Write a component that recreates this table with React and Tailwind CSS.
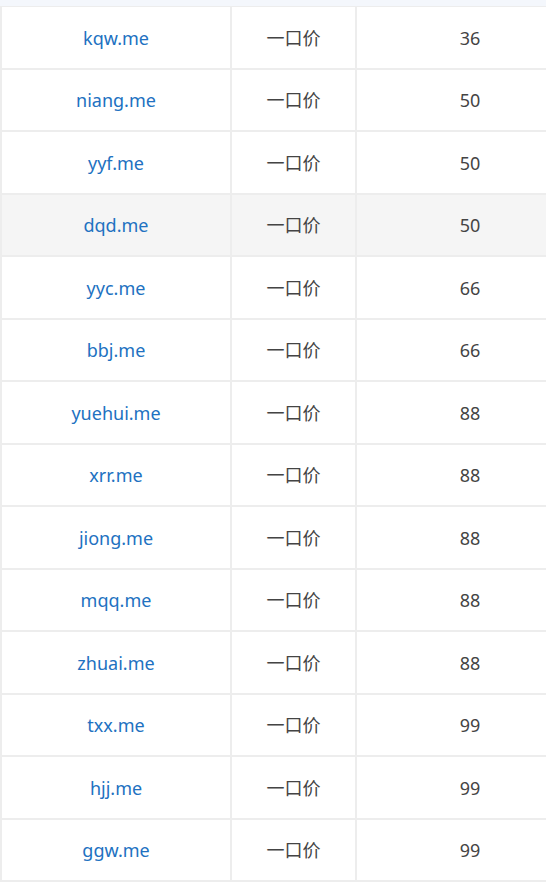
const rows = [
  ["kqw.me", "36"],
  ["niang.me", "50"],
  ["yyf.me", "50"],
  ["dqd.me", "50", true],
  ["yyc.me", "66"],
  ["bbj.me", "66"],
  ["yuehui.me", "88"],
  ["xrr.me", "88"],
  ["jiong.me", "88"],
  ["mqq.me", "88"],
  ["zhuai.me", "88"],
  ["txx.me", "99"],
  ["hjj.me", "99"],
  ["ggw.me", "99"],
];

export default function App() {
  return (
    <div
      className="w-[546px] h-[884px] overflow-hidden bg-white"
      style={{ fontFamily: '"Noto Sans", "Noto Sans CJK SC", sans-serif' }}
    >
      <div className="h-[6px] bg-[#f4f7fc]" />
      <div className="w-[585px] border-t border-[#ededed]">
        {rows.map(([name, price, hl]) => (
          <div
            key={name}
            className={`grid grid-cols-[232px_125px_228px] h-[62.5px] border-b-2 border-[#ededed] text-[18px] ${hl ? "bg-[#f5f5f5]" : "bg-white"}`}
          >
            <div className="flex items-center justify-center pt-[2px] border-l-2 border-r-2 border-[#ededed] text-[#2171c1]">
              {name}
            </div>
            <div className="flex items-center justify-center pt-[2px] border-r-2 border-[#ededed] text-[#444]">
              一口价
            </div>
            <div className="flex items-center justify-center pt-[2px] border-r-2 border-[#ededed] text-[#444]">
              {price}
            </div>
          </div>
        ))}
      </div>
    </div>
  );
}
